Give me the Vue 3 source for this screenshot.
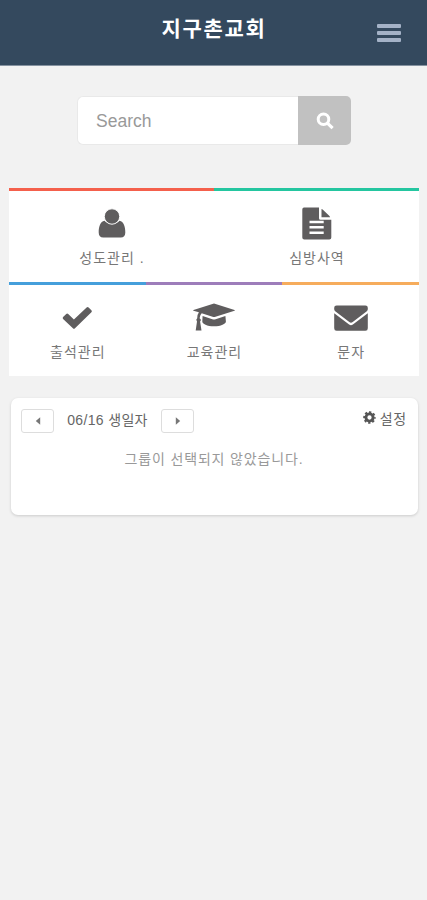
<script setup>
const rows = [
  [
    { label: '성도관리 .', icon: 'user', color: '#f4604c' },
    { label: '심방사역', icon: 'file', color: '#24c6a0' },
  ],
  [
    { label: '출석관리', icon: 'check', color: '#459fdb' },
    { label: '교육관리', icon: 'cap', color: '#9d7dba' },
    { label: '문자', icon: 'mail', color: '#f6ac5c' },
  ],
]
</script>

<template>
  <div class="page">
    <header class="header">
      <span class="spacer"></span>
      <h1>지구촌교회</h1>
      <button class="menu" aria-label="메뉴"><i></i><i></i><i></i></button>
    </header>

    <form class="search" @submit.prevent>
      <input type="text" placeholder="Search" />
      <button aria-label="검색">
        <svg width="18" height="18" viewBox="0 0 18 18" fill="none" stroke="#fff">
          <circle cx="7.500" cy="7.300" r="5.300" stroke-width="3" />
          <path d="M11.400 11.200 16.600 16.200" stroke-width="3.200" />
        </svg>
      </button>
    </form>

    <nav class="tiles">
      <div v-for="(row, r) in rows" :key="r" class="row">
        <a v-for="t in row" :key="t.label" class="tile" :style="{ borderTopColor: t.color }">
          <svg class="icon" width="44" height="36" viewBox="0 0 44 36" fill="#5f5d5e">
            <template v-if="t.icon === 'user'">
              <path d="M14.500 14.800C16.600 17.200 19 18.200 22 18.200S27.400 17.200 29.500 14.800C33.700 15.400 35.300 20.800 35.300 26.500C35.300 29.700 33.600 31.600 30.800 31.600H13.200C10.400 31.600 8.700 29.700 8.700 26.500C8.700 20.800 10.300 15.400 14.500 14.800Z" />
              <circle cx="22" cy="10.500" r="7.700" stroke="#fff" stroke-width=".9" />
            </template>
            <template v-else-if="t.icon === 'file'">
              <path fill-rule="evenodd" d="M9 1.500H24V12.300Q24 13.800 25.500 13.800H36.300V31.500Q36.300 33.500 34.300 33.500H9.300Q7.300 33.500 7.300 31.500V3.500Q7.300 1.500 9 1.500ZM14.500 14.800V17.300H28.700V14.800ZM14.500 20.100V22.600H28.700V20.100ZM14.500 25.400V27.900H28.700V25.400Z" />
              <path d="M26.500 3Q27.300 3.200 27.900 3.800L34.200 9.800Q34.900 10.500 35.100 11.300H26.500Z" />
            </template>
            <path v-else-if="t.icon === 'check'" d="M8.100 16.100 11.200 13Q12.200 12.100 13.200 13L18.900 18.600 31.600 6.500Q32.600 5.500 33.600 6.500L36.400 9.300Q37.400 10.300 36.400 11.300L20 27.200Q18.900 28.200 17.900 27.200L8.100 17.900Q7.200 17 8.100 16.100Z" />
            <template v-else-if="t.icon === 'cap'">
              <path d="M22 2.500 42.500 8.900Q43.400 9.300 42.500 9.700L22.700 15.900Q22 16.100 21.300 15.900L9.700 12.200Q7.700 14 7.600 17.200Q9.800 18.700 8.100 20.600L9.500 29.600H3.700L5 20.600Q3.400 18.700 5.200 17.200Q5.200 13.500 6.900 11.300L1.500 9.700Q.6 9.300 1.500 8.900Z" />
              <path d="M10.600 15.100 21.100 18.400Q22 18.700 22.900 18.400L33.400 15.100 33.900 20.400C33.900 22.800 28.900 25.300 22 25.300S10.300 22.800 10.300 20.400Z" />
            </template>
            <template v-else>
              <path d="M5.200 8.200V6.700Q5.200 4.500 7.600 4.500H36.400Q38.800 4.500 38.800 6.700V8.200Q38.700 9.700 37.500 10.600L23.700 21.100Q22 22.400 20.300 21.100L6.500 10.600Q5.300 9.700 5.200 8.200Z" />
              <path d="M5.200 12.300 20.100 23.500Q22 24.900 23.900 23.500L38.800 12.300V27.200Q38.800 29.700 36.400 29.700H7.600Q5.200 29.700 5.200 27.200Z" />
            </template>
          </svg>
          <span>{{ t.label }}</span>
        </a>
      </div>
    </nav>

    <section class="card">
      <div class="bar">
        <button class="arrow" aria-label="이전">
          <svg width="6" height="8" viewBox="0 0 6 8"><path d="M5.200 .3V7.700L.8 4Z" fill="#777" /></svg>
        </button>
        <span class="date">06/16 생일자</span>
        <button class="arrow" aria-label="다음">
          <svg width="6" height="8" viewBox="0 0 6 8"><path d="M.8 .3V7.700L5.200 4Z" fill="#777" /></svg>
        </button>
        <a class="settings">
          <svg width="13" height="13" viewBox="0 0 13 13" fill="none" stroke="#555">
            <circle cx="6.500" cy="6.500" r="3.600" stroke-width="2.900" />
            <circle cx="6.500" cy="6.500" r="5.400" stroke-width="1.800" stroke-dasharray="2.300 1.941" stroke-dashoffset="1.150" />
          </svg>
          <span>설정</span>
        </a>
      </div>
      <p>그룹이 선택되지 않았습니다.</p>
    </section>
  </div>
</template>

<style>
body { background: #f2f2f2; }
</style>

<style scoped>
.page {
  min-height: 900px;
  background: #f2f2f2;
  font-family: "Liberation Sans", "Noto Sans CJK KR", sans-serif;
  color: #777;
}
button { margin: 0; padding: 0; font: inherit; }
.header {
  box-sizing: border-box;
  height: 66px;
  padding: 0 26px;
  display: flex;
  justify-content: space-between;
  background: #34495e;
  border-bottom: 1px solid #8592a0;
}
.spacer { width: 24px; }
h1 {
  margin: 14px 0 0;
  font-size: 21px;
  line-height: 30px;
  font-weight: 700;
  letter-spacing: 1.700px;
  padding-left: 1px;
  color: #fff;
}
.menu {
  width: 24px;
  height: 20px;
  margin-top: 24px;
  display: flex;
  flex-direction: column;
  gap: 3px;
  background: none;
  border: 0;
}
.menu i { height: 4px; width: 24px; background: #a4b2c7; border-radius: 1px; }
.search {
  display: flex;
  width: 274px;
  height: 49px;
  margin: 30px 0 0 77px;
}
.search input {
  box-sizing: border-box;
  width: 221px;
  height: 49px;
  padding: 1px 18px 0;
  border: 1px solid #e9e9e9;
  border-right: 0;
  border-radius: 6px 0 0 6px;
  background: #fff;
  font: 17.500px "Liberation Sans", sans-serif;
  outline: none;
}
.search input::placeholder { color: #999; opacity: 1; }
.search button {
  flex: 1;
  display: flex;
  align-items: center;
  justify-content: center;
  border: 0;
  border-radius: 0 5px 5px 0;
  background: #c1c1c1;
}
.tiles { margin: 43px 8px 0 9px; background: #fff; }
.row { display: flex; height: 94px; }
.tile {
  flex: 1;
  display: flex;
  flex-direction: column;
  align-items: center;
  border-top: 3px solid;
}
.icon { margin-top: 15px; }
.tile span {
  margin-top: 6px;
  font-size: 14px;
  line-height: 20px;
  letter-spacing: 1px;
  padding-left: 1px;
  white-space: nowrap;
}
.row + .row .icon { margin-top: 16px; }
.row + .row span { margin-top: 5px; }
.card {
  box-sizing: border-box;
  height: 117px;
  margin: 22px 9px 0 11px;
  padding: 10px 11px 0 10px;
  border-radius: 7px;
  background: #fff;
  box-shadow: 0 1px 3px rgba(0, 0, 0, .16);
}
.bar { display: flex; align-items: center; height: 25px; font-size: 14px; }
.arrow {
  box-sizing: border-box;
  width: 33px;
  height: 24px;
  display: flex;
  align-items: center;
  justify-content: center;
  border: 1px solid #ddd;
  border-radius: 3px;
  background: #fff;
}
.date {
  width: 107px;
  margin-top: -4px;
  text-align: center;
  letter-spacing: .35px;
  color: #666;
  white-space: nowrap;
}
.settings {
  margin-left: auto;
  margin-top: -6px;
  display: flex;
  align-items: center;
  gap: 4px;
  letter-spacing: .8px;
  color: #666;
}
p {
  margin: 16px 0 0;
  text-align: center;
  font-size: 14px;
  line-height: 20px;
  letter-spacing: .85px;
  color: #999;
}
</style>
